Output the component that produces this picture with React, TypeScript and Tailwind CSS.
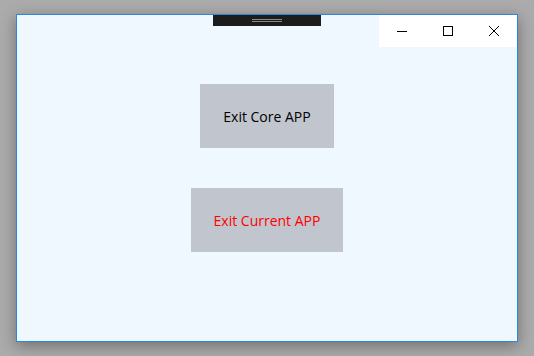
export default function App() {
  return (
    <div
      className="w-[534px] h-[356px] bg-[#ababab] pt-[14px] pl-[16px]"
      style={{ fontFamily: '"Open Sans", "Noto Sans", sans-serif' }}
    >
      <div className="relative w-[502px] h-[328px] border border-[#2b88d8] bg-[#eff7ff] shadow-[0_4px_14px_rgba(0,0,0,0.35)]">
        {/* drag handle */}
        <div className="absolute left-[196px] top-0 w-[108px] h-[11px] bg-[#1c1c1c] flex flex-col items-center justify-center gap-[1px]">
          <div className="w-[30px] h-px bg-[#8a8a8a]" />
          <div className="w-[30px] h-px bg-[#8a8a8a]" />
        </div>

        {/* caption buttons */}
        <div className="absolute right-0 top-0 w-[138px] h-[32px] bg-white flex">
          <div className="w-[46px] h-full flex items-center justify-center">
            <svg width="10" height="10" viewBox="0 0 10 10">
              <path d="M0 5.5H10" stroke="#000" strokeWidth="1" />
            </svg>
          </div>
          <div className="w-[46px] h-full flex items-center justify-center">
            <svg width="10" height="10" viewBox="0 0 10 10">
              <rect x="0.5" y="0.5" width="9" height="9" fill="none" stroke="#000" strokeWidth="1" />
            </svg>
          </div>
          <div className="w-[46px] h-full flex items-center justify-center">
            <svg width="10" height="10" viewBox="0 0 10 10">
              <path d="M0 0L10 10M10 0L0 10" stroke="#000" strokeWidth="1" />
            </svg>
          </div>
        </div>

        <div className="flex flex-col items-center pt-[69px] gap-[40px]">
          <button className="w-[134px] h-[64px] bg-[#c1c5cd] text-black text-[14px]">
            Exit Core APP
          </button>
          <button className="w-[152px] h-[64px] bg-[#c1c5cd] text-[#ff0000] text-[14px]">
            Exit Current APP
          </button>
        </div>
      </div>
    </div>
  );
}
